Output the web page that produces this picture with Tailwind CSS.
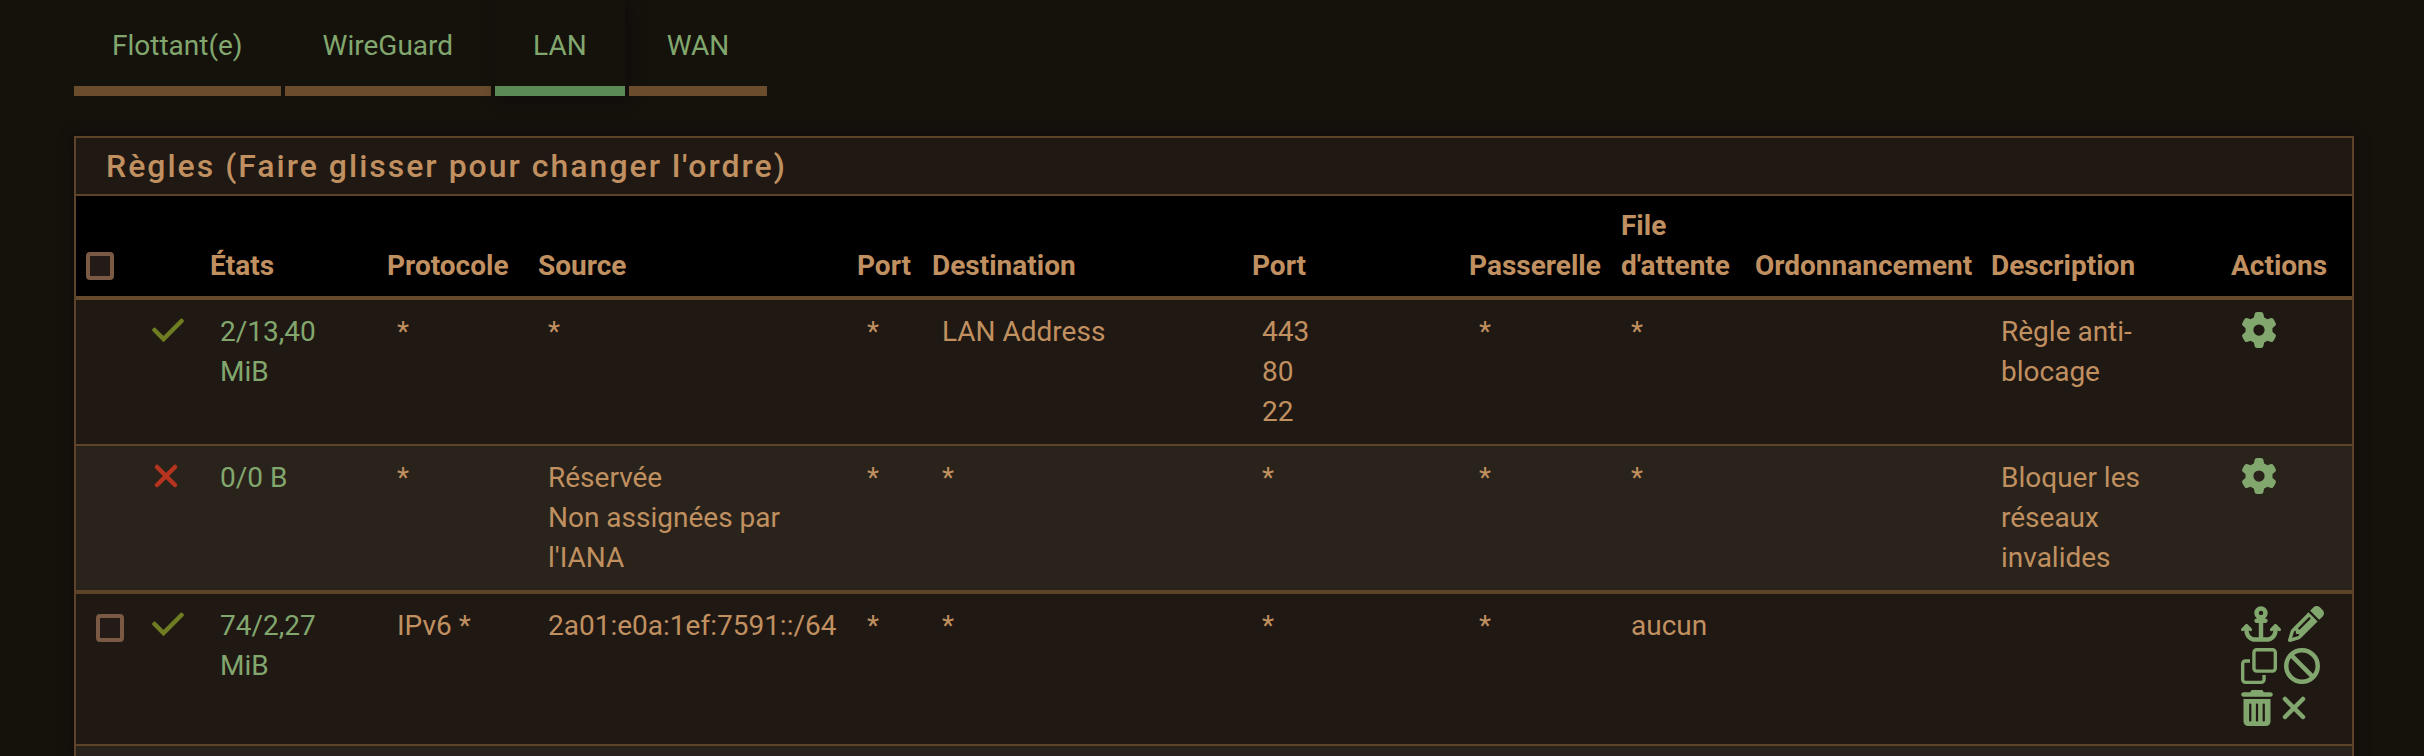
<!DOCTYPE html>
<html lang="fr">
<head>
    <meta charset="UTF-8">
    <meta name="viewport" content="width=device-width, initial-scale=1.0">
    <title>Règles du pare-feu - LAN</title>
    <script src="https://cdn.jsdelivr.net/npm/@tailwindcss/browser@4"></script>
</head>
<body class="min-h-screen bg-[#15120c] font-['Roboto',sans-serif] text-[28px] leading-10 text-[#c09060]">
    <!-- Shared icon shapes -->
    <svg class="hidden">
        <symbol id="check" viewBox="0 0 448 512"><path d="M416 128L160 384L32 256" fill="none" stroke="currentColor" stroke-width="64" stroke-linecap="round" stroke-linejoin="miter"/></symbol>
        <symbol id="xmark" viewBox="0 0 384 512"><path d="M64 128L320 384M320 128L64 384" fill="none" stroke="currentColor" stroke-width="64" stroke-linecap="round"/></symbol>
        <symbol id="gear" viewBox="0 0 512 512"><path fill="currentColor" d="M495.9 166.6c3.2 8.7 .5 18.4-6.4 24.6l-43.3 39.4c1.1 8.3 1.7 16.8 1.7 25.4s-.6 17.1-1.7 25.4l43.3 39.4c6.9 6.2 9.6 15.9 6.4 24.6c-4.4 11.9-9.7 23.3-15.8 34.3l-4.7 8.1c-6.6 11-14 21.4-22.1 31.2c-5.9 7.2-15.7 9.6-24.5 6.8l-55.7-17.7c-13.4 10.3-28.2 18.9-44 25.4l-12.5 57.1c-2 9.1-9 16.3-18.2 17.8c-13.8 2.3-28 3.5-42.5 3.5s-28.7-1.2-42.5-3.5c-9.2-1.5-16.2-8.7-18.2-17.8l-12.5-57.1c-15.8-6.5-30.6-15.1-44-25.4L83.1 425.9c-8.8 2.8-18.6 .3-24.5-6.8c-8.1-9.8-15.5-20.2-22.1-31.2l-4.7-8.1c-6.1-11-11.4-22.4-15.8-34.3c-3.2-8.7-.5-18.4 6.4-24.6l43.3-39.4C64.6 273.1 64 264.6 64 256s.6-17.1 1.7-25.4L22.4 191.2c-6.9-6.2-9.6-15.9-6.4-24.6c4.4-11.9 9.7-23.3 15.8-34.3l4.7-8.1c6.6-11 14-21.4 22.1-31.2c5.9-7.2 15.7-9.6 24.5-6.8l55.7 17.7c13.4-10.3 28.2-18.9 44-25.4l12.5-57.1c2-9.1 9-16.3 18.2-17.8C227.3 1.2 241.5 0 256 0s28.7 1.2 42.5 3.5c9.2 1.5 16.2 8.7 18.2 17.8l12.5 57.1c15.8 6.5 30.6 15.1 44 25.4l55.7-17.7c8.8-2.8 18.6-.3 24.5 6.8c8.1 9.8 15.5 20.2 22.1 31.2l4.7 8.1c6.1 11 11.4 22.4 15.8 34.3zM256 336a80 80 0 1 0 0-160 80 80 0 1 0 0 160z"/></symbol>
        <symbol id="anchor" viewBox="0 0 576 512"><path fill="currentColor" d="M320 96a32 32 0 1 1 -64 0 32 32 0 1 1 64 0zm21.1 80C367 158.8 384 129.4 384 96c0-53-43-96-96-96s-96 43-96 96c0 33.4 17 62.8 42.9 80H224c-17.7 0-32 14.3-32 32s14.3 32 32 32h32V448H208c-53 0-96-43-96-96v-6.1l7 7c9.4 9.4 24.6 9.4 33.9 0s9.4-24.6 0-33.9L97 263c-9.4-9.4-24.6-9.4-33.9 0L7 319c-9.4 9.4-9.4 24.6 0 33.9s24.6 9.4 33.9 0l7-7V352c0 88.4 71.6 160 160 160h80 80c88.4 0 160-71.6 160-160v-6.1l7 7c9.4 9.4 24.6 9.4 33.9 0s9.4-24.6 0-33.9L513 263c-9.4-9.4-24.6-9.4-33.9 0L423 319c-9.4 9.4-9.4 24.6 0 33.9s24.6 9.4 33.9 0l7-7V352c0 53-43 96-96 96H320V240h32c17.7 0 32-14.3 32-32s-14.3-32-32-32H341.1z"/></symbol>
        <symbol id="pencil" viewBox="0 0 512 512"><path fill="currentColor" d="M410.3 231l11.3-11.3-33.9-33.9-62.1-62.1L291.7 89.8l-11.3 11.3-22.6 22.6L58.6 322.9c-10.4 10.4-18 23.3-22.2 37.4L1 480.7c-2.5 8.4-.2 17.5 6.1 23.7s15.3 8.5 23.7 6.1l120.3-35.4c14.1-4.2 27-11.8 37.4-22.2L387.7 253.7 410.3 231zM160 399.4l-9.1 22.7c-4 3.1-8.5 5.4-13.3 6.9L59.4 452l23-78.1c1.4-4.9 3.8-9.4 6.9-13.3l22.7-9.1v32c0 8.8 7.2 16 16 16h32zM362.7 18.7L348.3 33.2 325.7 55.8 314.3 67.1l33.9 33.9 62.1 62.1 33.9 33.9 11.3-11.3 22.6-22.6 14.5-14.5c25-25 25-65.5 0-90.5L453.3 18.7c-25-25-65.5-25-90.5 0zm-47.4 168l-144 144c-6.2 6.2-16.4 6.2-22.6 0s-6.2-16.4 0-22.6l144-144c6.2-6.2 16.4-6.2 22.6 0s6.2 16.4 0 22.6z"/></symbol>
        <symbol id="clone" viewBox="0 0 512 512"><path fill="currentColor" d="M64 464H288c8.8 0 16-7.2 16-16V384h48v64c0 35.3-28.7 64-64 64H64c-35.3 0-64-28.7-64-64V224c0-35.3 28.7-64 64-64h64v48H64c-8.8 0-16 7.2-16 16V448c0 8.8 7.2 16 16 16zM224 304H448c8.8 0 16-7.2 16-16V64c0-8.8-7.2-16-16-16H224c-8.8 0-16 7.2-16 16V288c0 8.8 7.2 16 16 16zm-64-16V64c0-35.3 28.7-64 64-64H448c35.3 0 64 28.7 64 64V288c0 35.3-28.7 64-64 64H224c-35.3 0-64-28.7-64-64z"/></symbol>
        <symbol id="ban" viewBox="0 0 512 512"><g fill="none" stroke="currentColor" stroke-width="64"><circle cx="256" cy="256" r="224"/><path d="M98 98L414 414"/></g></symbol>
        <symbol id="trash" viewBox="0 0 448 512"><path fill="currentColor" d="M135.2 17.7L128 32H32C14.3 32 0 46.3 0 64S14.3 96 32 96H416c17.7 0 32-14.3 32-32s-14.3-32-32-32H320l-7.2-14.3C307.4 6.8 296.3 0 284.2 0H163.8c-12.1 0-23.2 6.8-28.6 17.7zM416 128H32V448c0 35.3 28.7 64 64 64H352c35.3 0 64-28.7 64-64V128zM144 208V432c0 8.8-7.2 16-16 16s-16-7.2-16-16V208c0-8.8 7.2-16 16-16s16 7.2 16 16zm96 0V432c0 8.8-7.2 16-16 16s-16-7.2-16-16V208c0-8.8 7.2-16 16-16s16 7.2 16 16zm96 0V432c0 8.8-7.2 16-16 16s-16-7.2-16-16V208c0-8.8 7.2-16 16-16s16 7.2 16 16z"/></symbol>
    </svg>

    <nav class="flex gap-1 px-[74px] text-[#82a76e]">
        <a href="#" class="border-b-10 border-[#6b4d2e] px-[38px] pt-[26px] pb-5">Flottant(e)</a>
        <a href="#" class="border-b-10 border-[#6b4d2e] px-[38px] pt-[26px] pb-5">WireGuard</a>
        <a href="#" aria-current="page" class="border-b-10 border-[#5c8a56] px-[38px] pt-[26px] pb-5 shadow-[4px_4px_12px_rgba(16,12,12,0.9)]">LAN</a>
        <a href="#" class="border-b-10 border-[#6b4d2e] px-[38px] pt-[26px] pb-5">WAN</a>
    </nav>

    <main class="mt-10 mr-[70px] ml-[74px] border-x-2 border-t-2 border-[#5d4327] bg-[#201813] shadow-[0_0_12px_rgba(16,10,12,0.9)]">
        <h2 class="border-b-2 border-[#5d4327] px-[30px] py-2 text-[32px] font-medium tracking-[2px]">Règles (Faire glisser pour changer l'ordre)</h2>
        <table class="w-full table-fixed border-separate border-spacing-0 text-left [&_td]:border-[#5d4327] [&_td]:py-3 [&_td]:pr-2 [&_td]:pl-5 [&_td]:align-top [&_th]:border-b-4 [&_th]:border-[#664a2c] [&_th]:py-[10px] [&_th]:pl-[10px] [&_th]:align-bottom [&_th]:font-bold">
            <colgroup>
                <col class="w-[56px]">
                <col class="w-[68px]">
                <col class="w-[177px]">
                <col class="w-[151px]">
                <col class="w-[319px]">
                <col class="w-[75px]">
                <col class="w-[320px]">
                <col class="w-[217px]">
                <col class="w-[152px]">
                <col class="w-[134px]">
                <col class="w-[236px]">
                <col class="w-[240px]">
                <col class="w-[131px]">
            </colgroup>
            <thead class="bg-black">
                <tr>
                    <th><input type="checkbox" aria-label="Tout sélectionner" class="mb-[6px] block size-7 appearance-none rounded-sm border-4 border-[#7a5a45] bg-[#241a18]"></th>
                    <th></th>
                    <th>États</th>
                    <th>Protocole</th>
                    <th>Source</th>
                    <th>Port</th>
                    <th>Destination</th>
                    <th>Port</th>
                    <th>Passerelle</th>
                    <th>File d'attente</th>
                    <th>Ordonnancement</th>
                    <th>Description</th>
                    <th>Actions</th>
                </tr>
            </thead>
            <tbody>
                <tr>
                    <td></td>
                    <td><svg class="h-9 w-8 text-[#6e7d22]"><use href="#check"/></svg></td>
                    <td><a href="#" class="text-[#82a76e]">2/13,40<br>MiB</a></td>
                    <td>*</td>
                    <td>*</td>
                    <td>*</td>
                    <td>LAN Address</td>
                    <td>443<br>80<br>22</td>
                    <td>*</td>
                    <td>*</td>
                    <td></td>
                    <td>Règle anti-blocage</td>
                    <td><a href="#" aria-label="Paramètres" class="block text-[#82a76e]"><svg class="size-9"><use href="#gear"/></svg></a></td>
                </tr>
                <tr class="bg-[#2a231b] [&_td]:border-t-2">
                    <td></td>
                    <td><svg class="h-9 w-7 text-[#b5331f]"><use href="#xmark"/></svg></td>
                    <td><a href="#" class="text-[#82a76e]">0/0 B</a></td>
                    <td>*</td>
                    <td>Réservée<br>Non assignées par l'IANA</td>
                    <td>*</td>
                    <td>*</td>
                    <td>*</td>
                    <td>*</td>
                    <td>*</td>
                    <td></td>
                    <td>Bloquer les réseaux invalides</td>
                    <td><a href="#" aria-label="Paramètres" class="block text-[#82a76e]"><svg class="size-9"><use href="#gear"/></svg></a></td>
                </tr>
                <tr class="[&_td]:border-t-4">
                    <td><input type="checkbox" aria-label="Sélectionner la règle" class="mt-2 block size-7 appearance-none rounded-sm border-4 border-[#7a5a45] bg-[#241a18]"></td>
                    <td><svg class="h-9 w-8 text-[#6e7d22]"><use href="#check"/></svg></td>
                    <td><a href="#" class="text-[#82a76e]">74/2,27<br>MiB</a></td>
                    <td>IPv6 *</td>
                    <td class="whitespace-nowrap">2a01:e0a:1ef:7591::/64</td>
                    <td>*</td>
                    <td>*</td>
                    <td>*</td>
                    <td>*</td>
                    <td>aucun</td>
                    <td></td>
                    <td></td>
                    <td>
                        <div class="flex flex-wrap gap-x-[7px] text-[#82a76e]">
                            <a href="#" aria-label="Ancrer" class="h-[42px]"><svg class="h-9 w-10"><use href="#anchor"/></svg></a>
                            <a href="#" aria-label="Modifier" class="h-[42px]"><svg class="size-9"><use href="#pencil"/></svg></a>
                            <a href="#" aria-label="Copier" class="h-[42px]"><svg class="size-9"><use href="#clone"/></svg></a>
                            <a href="#" aria-label="Désactiver" class="h-[42px]"><svg class="size-9"><use href="#ban"/></svg></a>
                            <a href="#" aria-label="Supprimer" class="h-[42px]"><svg class="h-9 w-8"><use href="#trash"/></svg></a>
                            <a href="#" aria-label="Effacer les états" class="h-[42px]"><svg class="h-9 w-7"><use href="#xmark"/></svg></a>
                        </div>
                    </td>
                </tr>
                <tr class="bg-[#2a231b] [&_td]:border-t-2">
                    <td colspan="13" class="h-3 p-0!"></td>
                </tr>
            </tbody>
        </table>
    </main>
</body>
</html>
